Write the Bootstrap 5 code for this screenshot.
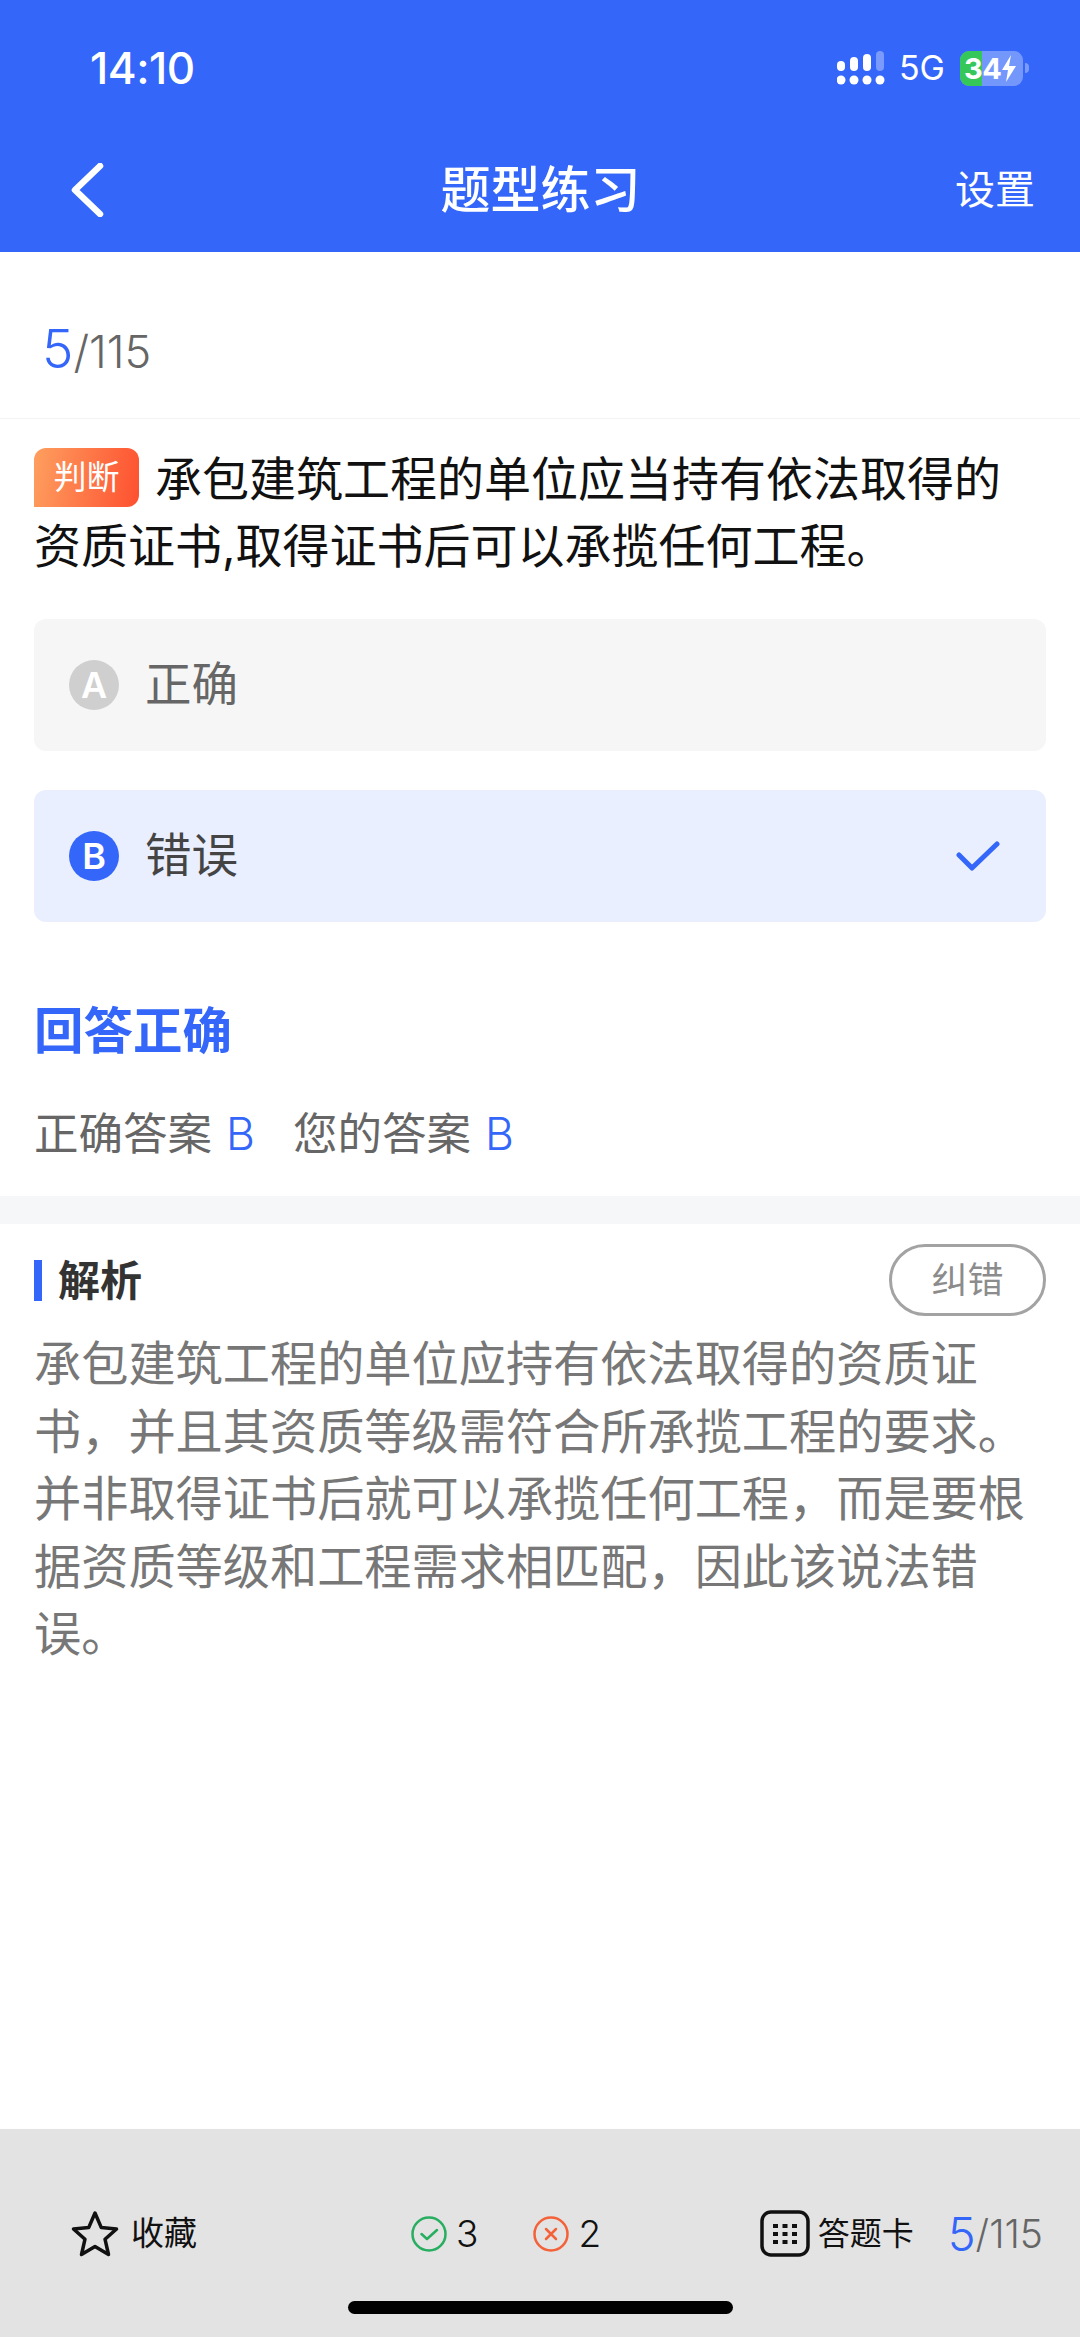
<!DOCTYPE html>
<html lang="zh-CN">
<head>
    <meta charset="UTF-8">
    <meta name="viewport" content="width=device-width, initial-scale=1.0">
    <title>题型练习</title>
    <link href="https://cdn.jsdelivr.net/npm/bootstrap@5.3.0/dist/css/bootstrap.min.css" rel="stylesheet">
    <style>
        body { font-family: Inter, "Noto Sans CJK SC", sans-serif; background: #fff; color: #111; }
        .page-wrap { width: 1080px; height: 2337px; overflow: hidden; }
        .top-blue { background: #3366f9; height: 252px; color: #fff; }
        .status-row { height: 136px; padding: 0 51px 0 90px; }
        .clock { font-size: 44px; font-weight: 500; line-height: 1; letter-spacing: -.5px; }
        .net-label { font-size: 34px; line-height: 1; margin: 0 15px 0 14px; }
        .batt { width: 63px; height: 35px; background: rgba(255,255,255,.32); border-radius: 9px; overflow: hidden; }
        .batt-fill { left: 0; top: 0; bottom: 0; width: 22px; background: #35c759; }
        .batt-txt { font-size: 29px; font-weight: 700; line-height: 35px; padding-left: 4px; letter-spacing: -.5px; }
        .batt-nub { width: 4px; height: 10px; margin-left: 2px; background: rgba(255,255,255,.35); border-radius: 0 4px 4px 0; }
        .nav-row { height: 116px; padding: 0 45px 8px 70px; }
        .nav-title { font-size: 50px; font-weight: 500; line-height: 1; }
        .nav-set { font-size: 40px; line-height: 1; width: 90px; }
        .back-slot { width: 66px; }
        .progress-row { height: 167px; padding: 71px 42px 0; border-bottom: 1px solid #f3f3f3; line-height: 1; }
        .num-now { font-size: 53px; color: #3366f9; font-weight: 300; }
        .num-all { font-size: 45px; color: #666; font-weight: 300; }
        .q-block { padding: 26px 34px 0; font-size: 47px; line-height: 67px; color: #111; }
        .q-tag { width: 105px; height: 59px; margin-right: 16px; vertical-align: top; margin-top: 3px; font-size: 33px; line-height: 59px; color: #fff; text-align: center; border-radius: 12px 12px 12px 0; background: linear-gradient(100deg, #fe9f5f, #fe5030); }
        .opt-list { padding: 40px 34px 0; gap: 39px; }
        .opt-item { height: 132px; padding: 0 46px 0 35px; border-radius: 12px; background: #f6f6f6; font-size: 46.500px; color: #666; }
        .opt-item.picked { background: #e9effe; color: #444; }
        .opt-mark { width: 50px; height: 50px; margin-right: 26px; border-radius: 50%; background: #cfcfcf; color: #fff; font-size: 36px; font-weight: 600; line-height: 50px; text-align: center; }
        .picked .opt-mark { background: #3366f9; }
        .result-box { padding: 85px 34px 0; height: 274px; }
        .result-title { font-size: 49.500px; font-weight: 700; line-height: 1; color: #3366f9; }
        .result-line { margin-top: 55px; font-size: 44.500px; line-height: 1; color: #666; }
        .result-line b { font-weight: 300; color: #3366f9; margin: 0 38px 0 14px; }
        .band { height: 28px; background: #f5f7f8; }
        .expl-box { padding: 20px 34px 0; }
        .expl-head { height: 72px; }
        .expl-bar { width: 8px; height: 41px; margin-right: 16px; background: #3366f9; }
        .expl-title { font-size: 42px; font-weight: 700; line-height: 1; color: #333; margin-top: 2px; }
        .fix-btn { width: 157px; height: 72px; border: 3px solid #a3a3a3; border-radius: 36px; font-size: 36px; line-height: 66px; text-align: center; color: #8c8c8c; }
        .expl-text { margin-top: 14px; font-size: 47.200px; line-height: 67.500px; color: #777; }
        .foot-bar { height: 208px; padding: 81px 37px 0 71px; background: #e3e3e3; }
        .foot-txt { font-size: 32px; line-height: 1; color: #111; }
        .foot-fav { font-size: 33px; margin-left: 12px; }
        .foot-count { font-size: 37px; line-height: 1; color: #111; margin-left: 9px; font-weight: 300; }
        .foot-now { font-size: 47px; line-height: 1; color: #3366f9; margin-left: 34px; font-weight: 300; }
        .foot-all { font-size: 39px; line-height: 1; color: #666; font-weight: 300; }
        .foot-left { width: 340px; height: 47px; }
        .foot-mid { height: 47px; }
        .foot-cross { margin-left: 55px; }
        .home-line { left: 348px; bottom: 23px; width: 385px; height: 13px; border-radius: 7px; background: #000; }
    </style>
</head>
<body>
    <div class="page-wrap d-flex flex-column">
        <div class="top-blue flex-shrink-0">
            <div class="status-row d-flex align-items-center justify-content-between">
                <span class="clock">14:10</span>
                <div class="d-flex align-items-center">
                    <svg width="48" height="34" viewBox="0 0 48 34" fill="#fff">
                        <rect x="0" y="10" width="8" height="10" rx="4"/>
                        <rect x="13" y="6" width="8" height="14" rx="4"/>
                        <rect x="26" y="3" width="8" height="17" rx="4"/>
                        <rect x="39" y="0" width="8" height="20" rx="4" fill-opacity=".35"/>
                        <circle cx="4" cy="29" r="4.5"/>
                        <circle cx="17" cy="29" r="4.5"/>
                        <circle cx="30" cy="29" r="4.5"/>
                        <circle cx="43" cy="29" r="4.5"/>
                    </svg>
                    <span class="net-label">5G</span>
                    <div class="batt position-relative">
                        <div class="batt-fill position-absolute"></div>
                        <div class="batt-txt position-relative d-flex align-items-center">34
                            <svg width="16" height="27" viewBox="0 0 16 27" fill="#fff"><path d="M10 0 1 15h6l-2 12 10-16H8z"/></svg>
                        </div>
                    </div>
                    <div class="batt-nub"></div>
                </div>
            </div>
            <div class="nav-row d-flex align-items-center justify-content-between">
                <div class="back-slot">
                    <svg class="d-block" width="34" height="54" viewBox="0 0 34 54" fill="none" stroke="#fff" stroke-width="6.500" stroke-linecap="round" stroke-linejoin="round"><path d="M30 3 5 27l25 24"/></svg>
                </div>
                <div class="nav-title">题型练习</div>
                <div class="text-end nav-set">设置</div>
            </div>
        </div>

        <div class="flex-grow-1">
            <div class="progress-row"><span class="num-now">5</span><span class="num-all">/115</span></div>

            <div class="q-block"><span class="q-tag d-inline-block">判断</span>承包建筑工程的单位应当持有依法取得的资质证书,取得证书后可以承揽任何工程。</div>

            <div class="opt-list d-flex flex-column">
                <div class="opt-item d-flex align-items-center">
                    <span class="opt-mark">A</span><span>正确</span>
                </div>
                <div class="opt-item picked d-flex align-items-center">
                    <span class="opt-mark">B</span><span>错误</span>
                    <svg class="ms-auto" width="44" height="30" viewBox="0 0 44 30" fill="none" stroke="#3366f9" stroke-width="5" stroke-linecap="round" stroke-linejoin="round"><path d="M3 14 16 27 41 3"/></svg>
                </div>
            </div>

            <div class="result-box">
                <div class="result-title">回答正确</div>
                <div class="result-line">正确答案<b>B</b>您的答案<b>B</b></div>
            </div>

            <div class="band"></div>

            <div class="expl-box">
                <div class="expl-head d-flex align-items-center">
                    <span class="expl-bar"></span>
                    <span class="expl-title">解析</span>
                    <span class="fix-btn ms-auto">纠错</span>
                </div>
                <div class="expl-text">承包建筑工程的单位应持有依法取得的资质证书，并且其资质等级需符合所承揽工程的要求。并非取得证书后就可以承揽任何工程，而是要根据资质等级和工程需求相匹配，因此该说法错误。</div>
            </div>
        </div>

        <div class="foot-bar flex-shrink-0 d-flex align-items-start position-relative">
            <div class="foot-left d-flex align-items-center">
                <svg width="48" height="47" viewBox="0 0 48 47" fill="none" stroke="#111" stroke-width="3.500" stroke-linejoin="round"><path d="M24 3l6.300 14.600 15.200 1.400-11.500 10.200 3.500 15.300L24 36.400l-13.500 8.100L14 29.200 2.500 19l15.200-1.400z"/></svg>
                <span class="foot-txt foot-fav">收藏</span>
            </div>
            <div class="foot-mid d-flex align-items-center">
                <svg width="36" height="36" viewBox="0 0 36 36" fill="none" stroke="#27ae60" stroke-width="2.500" stroke-linecap="round" stroke-linejoin="round"><circle cx="18" cy="18" r="16.500"/><path d="M10.500 18l5.500 5 10-9"/></svg>
                <span class="foot-count">3</span>
                <svg class="foot-cross" width="36" height="36" viewBox="0 0 36 36" fill="none" stroke="#f4623a" stroke-width="2.500" stroke-linecap="round"><circle cx="18" cy="18" r="16.500"/><path d="M13 13l10 10M23 13 13 23"/></svg>
                <span class="foot-count">2</span>
            </div>
            <div class="d-flex align-items-center ms-auto">
                <svg width="50" height="47" viewBox="0 0 50 47" fill="none"><rect x="2" y="2" width="46" height="43" rx="9" stroke="#111" stroke-width="3.500"/><g fill="#111"><rect x="13" y="14" width="5" height="4"/><rect x="22.500" y="14" width="5" height="4"/><rect x="32" y="14" width="5" height="4"/><rect x="13" y="22" width="5" height="4"/><rect x="22.500" y="22" width="5" height="4"/><rect x="32" y="22" width="5" height="4"/><rect x="13" y="30" width="5" height="4"/><rect x="22.500" y="30" width="5" height="4"/><rect x="32" y="30" width="5" height="4"/></g></svg>
                <span class="foot-txt ms-2">答题卡</span>
                <span class="foot-now">5</span><span class="foot-all">/115</span>
            </div>
            <div class="home-line position-absolute"></div>
        </div>
    </div>
    <script src="https://cdn.jsdelivr.net/npm/bootstrap@5.3.0/dist/js/bootstrap.bundle.min.js"></script>
</body>
</html>
